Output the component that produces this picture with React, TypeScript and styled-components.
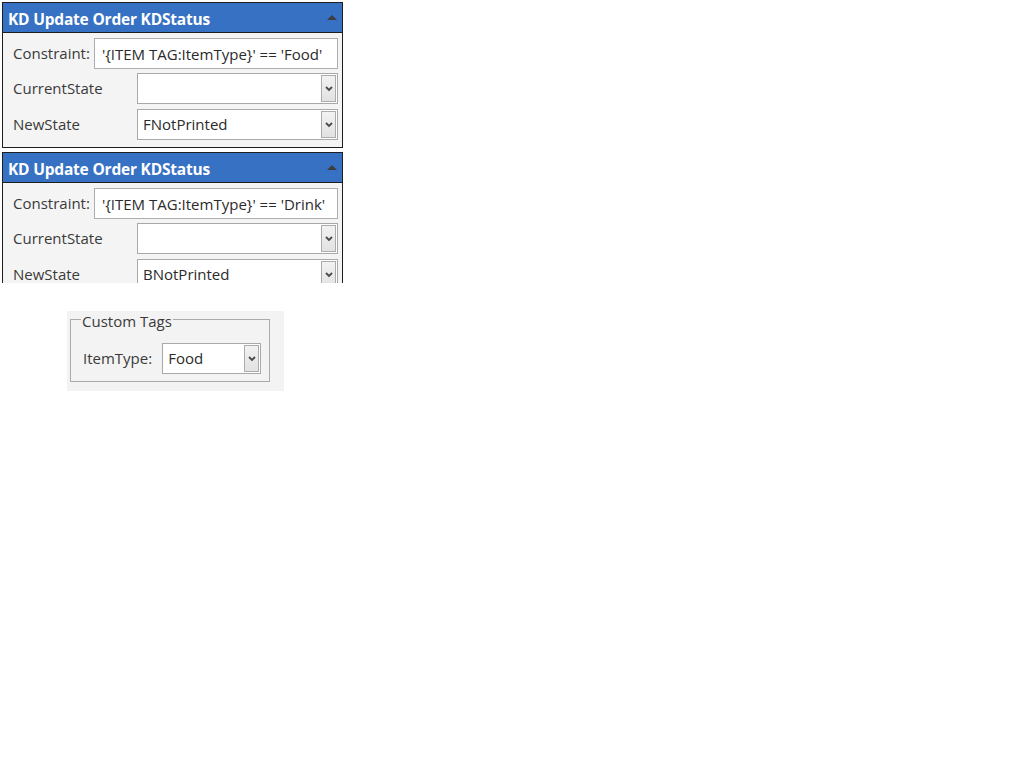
import styled, { createGlobalStyle } from 'styled-components';

const GlobalStyle = createGlobalStyle`
    body {
        margin: 0;
        background: #ffffff;
        font-family: 'Open Sans', 'Noto Sans', sans-serif;
        color: #3a3a3a;
    }
`

interface Rule {
    constraint: string;
    currentState: string;
    newState: string;
    clipped?: boolean;
}

const rules: Rule[] = [
    { constraint: "'{ITEM TAG:ItemType}' == 'Food'", currentState: '', newState: 'FNotPrinted' },
    { constraint: "'{ITEM TAG:ItemType}' == 'Drink'", currentState: '', newState: 'BNotPrinted', clipped: true },
];

function DropButton() {
    return (
        <ArrowButton>
            <svg width="8" height="6" viewBox="0 0 8 6">
                <path d="M1 1 L4 4 L7 1" fill="none" stroke="#4a4a4a" strokeWidth="1.8" />
            </svg>
        </ArrowButton>
    );
}

function ComboBox({ value, width }: { value: string; width?: number }) {
    return (
        <Combo $width={width}>
            <ComboText>{value}</ComboText>
            <DropButton />
        </Combo>
    );
}

function RulePanel({ rule }: { rule: Rule }) {
    return (
        <Panel $clipped={rule.clipped}>
            <Header>
                <HeaderTitle>KD Update Order KDStatus</HeaderTitle>
                <svg width="10" height="5" viewBox="0 0 10 5">
                    <path d="M0 5 L5 0 L10 5 Z" fill="#3d3d3d" />
                </svg>
            </Header>
            <Body>
                <ConstraintRow>
                    <Label $lift={1}>Constraint:</Label>
                    <TextBox>{rule.constraint}</TextBox>
                </ConstraintRow>
                <FieldRow>
                    <Label>CurrentState</Label>
                    <ComboBox value={rule.currentState} />
                </FieldRow>
                <FieldRow $top={5}>
                    <Label>NewState</Label>
                    <ComboBox value={rule.newState} />
                </FieldRow>
            </Body>
        </Panel>
    );
}

function App() {
    return (
        <Page>
            <GlobalStyle />
            {rules.map((rule, i) => <RulePanel key={i} rule={rule} />)}
            <TagsArea>
                <TagsBox>
                    <TagsLegend>Custom Tags</TagsLegend>
                    <TagRow>
                        <Label $lift={1}>ItemType:</Label>
                        <ComboBox value="Food" width={99} />
                    </TagRow>
                </TagsBox>
            </TagsArea>
        </Page>
    );
}

const Page = styled.div`
    padding: 2px;
    display: flex;
    flex-direction: column;
    gap: 4px;
    align-items: flex-start;
`

const Panel = styled.div<{ $clipped?: boolean }>`
    width: 341px;
    box-sizing: border-box;
    border: 1px solid #1e1e1e;
    border-bottom: ${p => p.$clipped ? 'none' : '1px solid #1e1e1e'};
    height: ${p => p.$clipped ? '131px' : '146px'};
    overflow: hidden;
    background: #f4f4f4;
`

const Header = styled.div`
    background: #3671c3;
    border-bottom: 1px solid #1e1e1e;
    display: flex;
    align-items: center;
    justify-content: space-between;
    padding: 2px 5px 0 5px;
    box-sizing: content-box;
    height: 27px;
    svg { margin-top: -3px; }
`

const HeaderTitle = styled.span`
    color: #ffffff;
    font-size: 15.5px;
    font-weight: bold;
    letter-spacing: -0.2px;
`

const Body = styled.div`
    padding: 5px 4px 6px 10px;
    display: flex;
    flex-direction: column;
`

const Label = styled.span<{ $lift?: number }>`
    font-size: 15px;
    color: #3a3a3a;
    white-space: nowrap;
    margin-top: -${p => p.$lift ?? 2}px;
`

const ConstraintRow = styled.div`
    display: flex;
    align-items: center;
    gap: 4px;
    height: 31px;
`

const FieldRow = styled.div<{ $top?: number }>`
    display: grid;
    grid-template-columns: 124px 1fr;
    align-items: center;
    height: 31px;
    margin-top: ${p => p.$top ?? 4}px;
`

const TextBox = styled.div`
    flex: 1;
    height: 31px;
    box-sizing: border-box;
    border: 1px solid #abadb3;
    background: #ffffff;
    padding: 0 0 0 7px;
    display: flex;
    align-items: center;
    font-size: 15px;
    color: #2b2b2b;
    white-space: nowrap;
    overflow: hidden;
`

const Combo = styled.div<{ $width?: number }>`
    width: ${p => p.$width ? `${p.$width}px` : '100%'};
    height: 31px;
    box-sizing: border-box;
    border: 1px solid #a9a9a9;
    background: #ffffff;
    display: flex;
    align-items: center;
    padding: 1px;
`

const ComboText = styled.span`
    flex: 1;
    padding-left: 4px;
    font-size: 15px;
    color: #2b2b2b;
    white-space: nowrap;
    margin-top: -1px;
`

const ArrowButton = styled.div`
    width: 15px;
    height: 27px;
    box-sizing: border-box;
    border: 1px solid #acacac;
    background: linear-gradient(#f2f2f2, #e2e2e2);
    display: flex;
    align-items: center;
    justify-content: center;
`

const TagsArea = styled.div`
    margin: 24px 0 0 65px;
    width: 217px;
    height: 80px;
    box-sizing: border-box;
    background: #f3f3f3;
    padding: 0 14px 0 3px;
`

const TagsBox = styled.fieldset`
    margin: -2px 0 0 0;
    padding: 14px 0 7px 12px;
    border: 1px solid #aaaaaa;
    min-width: 0;
`

const TagsLegend = styled.legend`
    padding: 4px 1px 0 1px;
    margin-left: -2px;
    font-size: 15px;
    line-height: 16px;
    color: #3a3a3a;
`

const TagRow = styled.div`
    display: flex;
    align-items: center;
    gap: 10px;
`

export default App;
